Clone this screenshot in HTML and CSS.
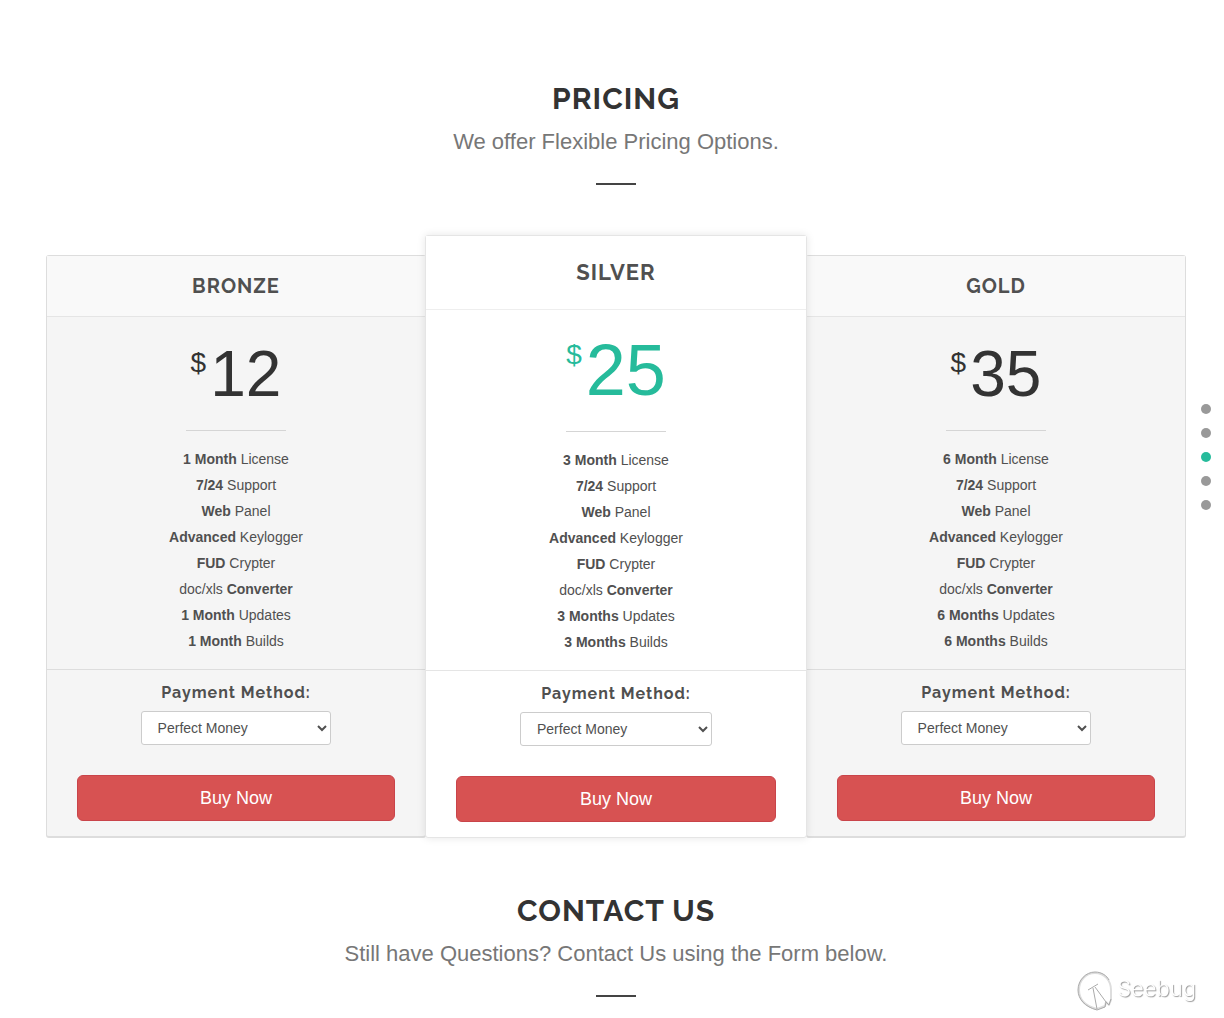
FILE: index.html
```
<!DOCTYPE html>
<html lang="en">
<head>
    <meta charset="UTF-8">
    <meta name="viewport" content="width=device-width, initial-scale=1.0">
    <title>Pricing</title>
    <link rel="stylesheet" href="styles.css">
</head>
<body>
    <section class="section" id="pricing">
        <div class="section-title">
            <h2>PRICING</h2>
            <p>We offer Flexible Pricing Options.</p>
        </div>

        <div class="pricing">
            <div class="pricing-box">
                <h3>BRONZE</h3>
                <div class="price"><span class="unit">$</span>12</div>
                <ul class="features">
                    <li><strong>1 Month</strong> License</li>
                    <li><strong>7/24</strong> Support</li>
                    <li><strong>Web</strong> Panel</li>
                    <li><strong>Advanced</strong> Keylogger</li>
                    <li><strong>FUD</strong> Crypter</li>
                    <li>doc/xls <strong>Converter</strong></li>
                    <li><strong>1 Month</strong> Updates</li>
                    <li><strong>1 Month</strong> Builds</li>
                </ul>
                <form class="action">
                    <label for="pay-bronze">Payment Method:</label>
                    <select id="pay-bronze">
                        <option>Perfect Money</option>
                    </select>
                    <button type="button">Buy Now</button>
                </form>
            </div>

            <div class="pricing-box best-price">
                <h3>SILVER</h3>
                <div class="price"><span class="unit">$</span>25</div>
                <ul class="features">
                    <li><strong>3 Month</strong> License</li>
                    <li><strong>7/24</strong> Support</li>
                    <li><strong>Web</strong> Panel</li>
                    <li><strong>Advanced</strong> Keylogger</li>
                    <li><strong>FUD</strong> Crypter</li>
                    <li>doc/xls <strong>Converter</strong></li>
                    <li><strong>3 Months</strong> Updates</li>
                    <li><strong>3 Months</strong> Builds</li>
                </ul>
                <form class="action">
                    <label for="pay-silver">Payment Method:</label>
                    <select id="pay-silver">
                        <option>Perfect Money</option>
                    </select>
                    <button type="button">Buy Now</button>
                </form>
            </div>

            <div class="pricing-box">
                <h3>GOLD</h3>
                <div class="price"><span class="unit">$</span>35</div>
                <ul class="features">
                    <li><strong>6 Month</strong> License</li>
                    <li><strong>7/24</strong> Support</li>
                    <li><strong>Web</strong> Panel</li>
                    <li><strong>Advanced</strong> Keylogger</li>
                    <li><strong>FUD</strong> Crypter</li>
                    <li>doc/xls <strong>Converter</strong></li>
                    <li><strong>6 Months</strong> Updates</li>
                    <li><strong>6 Months</strong> Builds</li>
                </ul>
                <form class="action">
                    <label for="pay-gold">Payment Method:</label>
                    <select id="pay-gold">
                        <option>Perfect Money</option>
                    </select>
                    <button type="button">Buy Now</button>
                </form>
            </div>
        </div>
    </section>

    <section class="section" id="contact">
        <div class="section-title">
            <h2>CONTACT US</h2>
            <p>Still have Questions? Contact Us using the Form below.</p>
        </div>
    </section>

    <nav class="dots">
        <a href="#home" aria-label="Home"></a>
        <a href="#features" aria-label="Features"></a>
        <a href="#pricing" class="current" aria-label="Pricing"></a>
        <a href="#contact" aria-label="Contact"></a>
        <a href="#footer" aria-label="Footer"></a>
    </nav>

    <div class="watermark">
        <svg width="38" height="40" viewBox="0 0 38 40" fill="none" stroke-linejoin="round">
            <path stroke="#ddd" stroke-width="2" d="M21 38 C9 35 3 28 3 19 C3 9 10 2 19 2 C29 2 35 10 35 19 V29 L33 34 L30 31 L29 35 Z"/>
            <path stroke="#aaa" stroke-width="1" d="M21 39 C9 36 2 28 2 19 C2 9 10 1 19 1 C26 1 31 5 33 9 M35 28 L33 34 L30 31 L29 36 L21 39"/>
            <path stroke="#aaa" stroke-width="1" d="M12 19 L22 13 M17 17 L21 38 M19 16 L30 31"/>
        </svg>
        <span>Seebug</span>
    </div>
</body>
</html>
```
FILE: styles.css
```
* {
    box-sizing: border-box;
}

body {
    margin: 0;
    padding-left: 8px;
    font-family: "Liberation Sans", Arial, sans-serif;
    font-size: 14px;
    color: #505050;
    background-color: #fff;
    overflow-x: hidden;
}

.section {
    max-width: 1140px;
    margin: 0 auto;
}

#pricing {
    padding-top: 81px;
}

#contact {
    padding-top: 55px;
}

/* Section headings */
.section-title {
    text-align: center;
}

.section-title h2 {
    margin: 0;
    font-family: Raleway, Lato, sans-serif;
    font-size: 30px;
    font-weight: 700;
    line-height: 36px;
    letter-spacing: 1px;
    color: #333;
}

.section-title p {
    margin: 10px 0 0;
    font-size: 22px;
    line-height: 30px;
    color: #777;
}

.section-title::after {
    content: "";
    display: block;
    width: 40px;
    height: 2px;
    margin: 26px auto 0;
    background-color: #444;
}

/* Pricing boxes */
.pricing {
    display: grid;
    grid-template-columns: repeat(3, 1fr);
    align-items: end;
    margin-top: 50px;
}

.pricing-box {
    text-align: center;
    background-color: #f5f5f5;
    border: 1px solid #ddd;
    border-bottom-width: 2px;
    border-radius: 3px;
}

.pricing-box h3 {
    margin: 0;
    padding: 18px 0;
    font-family: Raleway, Lato, sans-serif;
    font-size: 20px;
    line-height: 24px;
    letter-spacing: 1px;
    background-color: #f9f9f9;
    border-bottom: 1px solid #e5e5e5;
}

.price {
    display: flex;
    justify-content: center;
    padding: 25px 0 24px;
    font-size: 64px;
    line-height: 64px;
    color: #333;
}

.unit {
    margin-right: 4px;
    font-size: 28px;
    line-height: 42px;
}

.features {
    margin: 0;
    padding: 0 0 15px;
    list-style: none;
    line-height: 26px;
    border-bottom: 1px solid #ddd;
}

.features::before {
    content: "";
    display: block;
    width: 100px;
    height: 1px;
    margin: 0 auto 15px;
    background-color: #d5d5d5;
}

.action {
    display: flex;
    flex-direction: column;
    align-items: center;
    padding: 13px 30px 15px;
}

.action label {
    font-family: Raleway, Lato, sans-serif;
    font-size: 16px;
    font-weight: 700;
    line-height: 20px;
    letter-spacing: 1px;
}

.action select {
    width: 60%;
    height: 34px;
    margin-top: 8px;
    padding: 6px 12px;
    font-family: inherit;
    font-size: 14px;
    color: #505050;
    background-color: #fff;
    border: 1px solid #ccc;
    border-radius: 3px;
}

.action button {
    width: 100%;
    height: 46px;
    margin-top: 30px;
    font-family: inherit;
    font-size: 18px;
    color: #fff;
    background-color: #d75252;
    border: 1px solid #c9444a;
    border-radius: 6px;
    cursor: pointer;
}

/* Highlighted box */
.best-price {
    margin: 0 -1px;
    z-index: 1;
    background-color: #fff;
    border: 1px solid #e5e5e5;
    box-shadow: 0 0 8px rgba(0, 0, 0, 0.1);
}

.best-price h3 {
    padding: 24px 0 25px;
    font-size: 22px;
    background-color: #fff;
    border-color: #eee;
}

.best-price .price {
    padding: 24px 0 25px;
    font-size: 72px;
    line-height: 72px;
    color: #26bb9b;
}

.best-price .features {
    border-color: #e5e5e5;
}

/* Side navigation */
.dots {
    position: fixed;
    top: 404px;
    right: 13px;
    display: flex;
    flex-direction: column;
    gap: 14px;
}

.dots a {
    width: 10px;
    height: 10px;
    border-radius: 50%;
    background-color: #999;
}

.dots .current {
    background-color: #26bb9b;
}

.watermark {
    position: fixed;
    right: 28px;
    bottom: 7px;
    display: flex;
    align-items: flex-start;
    gap: 3px;
    font-family: Inter, sans-serif;
    font-size: 22px;
    font-weight: 300;
    line-height: 34px;
    color: #fff;
    text-shadow: 1px 1px 1px #999;
}
```
